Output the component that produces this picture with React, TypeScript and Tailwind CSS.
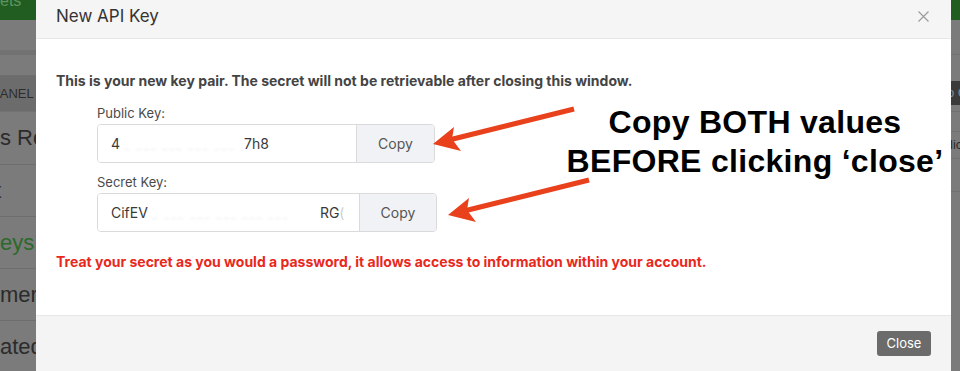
import React from "react";

const ui = { fontFamily: "Inter, 'Liberation Sans', Arial, sans-serif" };
const helv = { fontFamily: "'Liberation Sans', Arial, Helvetica, sans-serif" };

function LeftStrip() {
  return (
    <div className="flex w-[36px] shrink-0 flex-col overflow-hidden bg-[#7b7b7b]" style={helv}>
      <div className="h-[20px] overflow-hidden bg-[#215d21]">
        <div className="-mt-[7px] whitespace-nowrap pl-0 text-[16px] leading-[16px] text-[#5f945f]">ets</div>
      </div>
      <div className="h-[30px] bg-[#7b7b7b]" />
      <div className="h-[5px] bg-[#727272]" />
      <div className="h-[21px] border-b border-[#6e6e6e] bg-[#7b7b7b]" />
      <div className="flex h-[36px] items-center overflow-hidden border-b border-[#727272] bg-[#6c6c6c]">
        <span className="-ml-[8px] whitespace-nowrap text-[13px] text-[#2c2c2c]">PANEL</span>
      </div>
      <div className="flex h-[53px] items-center overflow-hidden whitespace-nowrap border-b border-[#6e6e6e] text-[22px] text-[#2b2b2b]">
        <span>s Ro</span>
      </div>
      <div className="flex h-[53px] items-center overflow-hidden whitespace-nowrap border-b border-[#6e6e6e] text-[22px] text-[#2b2b2b]">
        <span className="-ml-[5px]">t</span>
      </div>
      <div className="flex h-[52px] items-center overflow-hidden whitespace-nowrap border-b border-[#6e6e6e] text-[22px] text-[#2b6a2b]">
        <span>eys</span>
      </div>
      <div className="flex h-[52px] items-center overflow-hidden whitespace-nowrap border-b border-[#6e6e6e] text-[22px] text-[#2b2b2b]">
        <span>mer</span>
      </div>
      <div className="flex h-[50px] items-center overflow-hidden whitespace-nowrap text-[22px] text-[#2b2b2b]">
        <span>ated</span>
      </div>
    </div>
  );
}

function RightStrip() {
  return (
    <div className="flex w-[9px] shrink-0 flex-col overflow-hidden bg-[#7b7b7b]" style={helv}>
      <div className="h-[20px] bg-[#215d21]" />
      <div className="h-[35px] border-b border-[#717171]" />
      <div className="h-[26px]" />
      <div className="flex h-[24px] items-center overflow-hidden whitespace-nowrap bg-[#3a3a3a] text-[13px] text-[#8a8a8a]">
        <span className="-ml-[4px]">o C</span>
      </div>
      <div className="h-[7px] border-b border-[#717171]" />
      <div className="h-[20px] border-b border-[#717171]" />
      <div className="flex h-[27px] items-center overflow-hidden whitespace-nowrap border-b border-[#717171] text-[13px] text-[#2b2b2b]">
        <span className="-ml-[1px]">lic</span>
      </div>
      <div className="h-[33px] border-b border-[#717171]" />
      <div className="flex-1" />
    </div>
  );
}

function KeyField({
  label,
  start,
  gap,
  end,
  tail,
  fieldW,
  copyW,
  mt,
}: {
  label: string;
  start: string;
  gap: number;
  end: string;
  tail?: string;
  fieldW: number;
  copyW: number;
  mt: string;
}) {
  return (
    <div className={`ml-[41px] flex flex-col ${mt}`}>
      <div className="text-[13px] leading-[16px] text-[#4a4a4a]">{label}</div>
      <div className="mt-[3px] flex h-[39px] w-fit overflow-hidden rounded-[4px] border border-[#dadada]">
        <div className="flex items-center overflow-hidden whitespace-nowrap bg-white pl-[13px] text-[14px] text-[#3a3a3a]" style={{ width: fieldW }}>
          <span>{start}</span>
          <span className="mt-[4px] shrink-0 overflow-hidden px-[4px] text-[11px] tracking-[2px] text-[#ececec] blur-[1px]" style={{ width: gap }}>
            _ ___ ___ ___ ___ ___
          </span>
          <span>{end}</span>
          {tail ? <span className="text-[#cfcfcf]">{tail}</span> : null}
        </div>
        <div className="flex items-center justify-center border-l border-[#dadada] bg-[#f1f2f6] text-[14px] text-[#555]" style={{ width: copyW }}>
          Copy
        </div>
      </div>
    </div>
  );
}

function Modal() {
  return (
    <div className="flex w-[915px] shrink-0 flex-col bg-white" style={ui}>
      <div className="flex h-[39px] items-start justify-between border-b border-[#e7e7e7] bg-[#f5f5f5] pl-[20px] pr-[22px] pt-[5px]">
        <div className="text-[17px] leading-[22px] text-[#333]">New API Key</div>
        <svg width="11" height="11" viewBox="0 0 11 11" className="mt-[6px]">
          <path d="M0.5 0.5 L10.5 10.5 M10.5 0.5 L0.5 10.5" stroke="#9c9c9c" strokeWidth="1.2" fill="none" />
        </svg>
      </div>
      <div className="flex h-[276px] flex-col px-[20px] pt-[33px]">
        <div className="text-[14px] font-bold leading-[18px] text-[#444]">
          This is your new key pair. The secret will not be retrievable after closing this window.
        </div>
        <KeyField label="Public Key:" start="4" gap={124} end="7h8" fieldW={258} copyW={78} mt="mt-[15px]" />
        <KeyField label="Secret Key:" start="CifEV" gap={172} end="RG" tail="(" fieldW={261} copyW={77} mt="mt-[11px]" />
        <div className="mt-[21px] text-[14px] font-bold leading-[18px] text-[#e8281c]">
          Treat your secret as you would a password, it allows access to information within your account.
        </div>
      </div>
      <div className="flex flex-1 justify-end border-t border-[#e8e8e8] bg-[#f4f4f4] pr-[20px] pt-[15px]">
        <div className="flex h-[25px] w-[54px] items-center justify-center rounded-[3px] bg-[#6b6b6b] text-[13px] text-white">
          Close
        </div>
      </div>
    </div>
  );
}

function Annotation() {
  return (
    <>
      <svg className="pointer-events-none absolute left-0 top-0" width="960" height="371" viewBox="0 0 960 371">
        <line x1="574" y1="109" x2="451" y2="139.5" stroke="#e8411c" strokeWidth="5" />
        <polygon points="433,144 454,127 452,139 461,151" fill="#e8411c" />
        <line x1="589" y1="180" x2="466" y2="210.5" stroke="#e8411c" strokeWidth="5" />
        <polygon points="448,215 469,198 467,210 476,222" fill="#e8411c" />
      </svg>
      <div
        className="pointer-events-none absolute left-[555px] top-[103px] w-[400px] text-center text-[32px] font-bold leading-[39px] tracking-[0.3px] text-black"
        style={helv}
      >
        Copy BOTH values
        <br />
        BEFORE clicking ‘close’
      </div>
    </>
  );
}

export default function App() {
  return (
    <div className="relative flex h-[371px] w-[960px] overflow-hidden bg-[#7b7b7b]">
      <LeftStrip />
      <Modal />
      <RightStrip />
      <Annotation />
    </div>
  );
}
